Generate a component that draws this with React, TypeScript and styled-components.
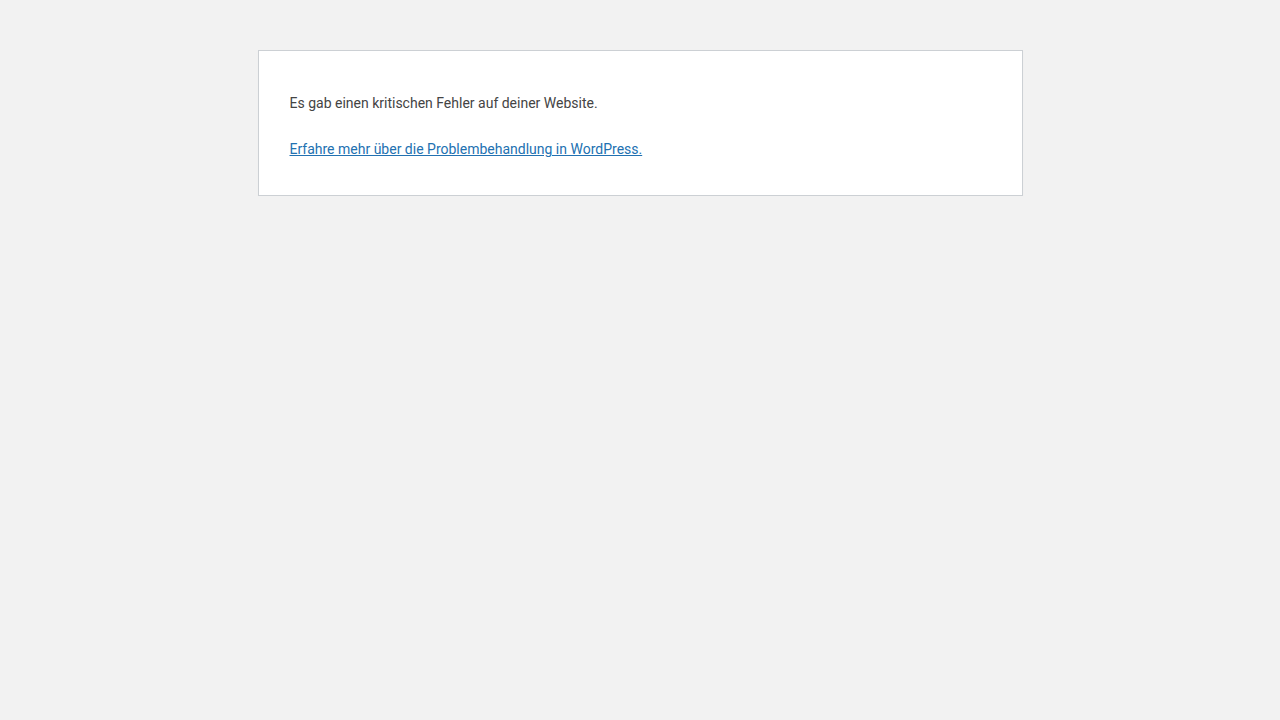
import React from "react";
import styled, { createGlobalStyle } from "styled-components";

const GlobalStyle = createGlobalStyle`
  html {
    background: #f2f2f2;
  }
  body {
    margin: 0;
    padding: 50px 0 0;
  }
`;

const ErrorPage = styled.div`
  box-sizing: content-box;
  background: #fff;
  border: 1px solid #ccd0d4;
  color: #444;
  font-family: Roboto, "Noto Sans", sans-serif;
  margin: 0 auto;
  padding: 1px 32px 1px 31px;
  max-width: 700px;
  box-shadow: 0 1px 1px rgba(0, 0, 0, 0.04);
`;

const Message = styled.div`
  font-size: 14px;
  line-height: 1.5;
  margin: 41px 0 20px;

  & p {
    margin: 0;
  }
`;

const Paragraph = styled.p`
  font-size: 14px;
  line-height: 1.5;
  margin: 25px 0 34px;
`;

const Link = styled.a`
  color: #2271b1;
  text-decoration: underline;
`;

export default function App() {
  return (
    <>
      <GlobalStyle />
      <ErrorPage>
        <Message>
          <p>Es gab einen kritischen Fehler auf deiner Website.</p>
        </Message>
        <Paragraph>
          <Link href="#">Erfahre mehr über die Problembehandlung in WordPress.</Link>
        </Paragraph>
      </ErrorPage>
    </>
  );
}
